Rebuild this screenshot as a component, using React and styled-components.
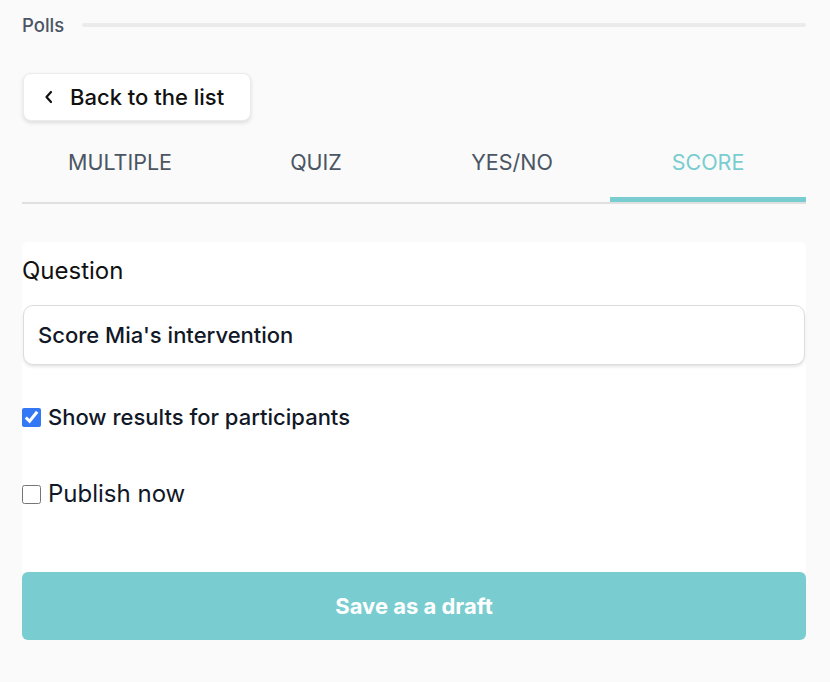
import React, { useState } from "react";
import styled, { createGlobalStyle } from "styled-components";

const GlobalStyle = createGlobalStyle`
  html, body {
    margin: 0;
    padding: 0;
    background: #fafafa;
    font-family: Inter, "Liberation Sans", sans-serif;
    color: #111827;
  }
  * { box-sizing: border-box; }
`;

const Page = styled.div`
  padding: 14px 24px 40px 22px;
  display: flex;
  flex-direction: column;
`;

const SectionHeader = styled.div`
  display: flex;
  align-items: center;
  gap: 18px;
  height: 22px;
`;

const SectionTitle = styled.span`
  font-size: 18.5px;
  font-weight: 500;
  color: #4b5563;
`;

const SectionRule = styled.div`
  flex: 1;
  height: 4px;
  background: #ebebeb;
  border-radius: 2px;
`;

const BackButton = styled.button`
  align-self: flex-start;
  margin-top: 37px;
  margin-left: 1px;
  height: 48px;
  padding: 0 26px 0 20px;
  display: flex;
  align-items: center;
  gap: 16px;
  background: #fff;
  border: 1px solid #ececec;
  border-radius: 8px;
  box-shadow: 0 2px 4px rgba(0, 0, 0, 0.12);
  font-family: inherit;
  font-size: 22px;
  font-weight: 500;
  color: #111;
  cursor: pointer;
`;

const TabList = styled.div`
  display: grid;
  grid-template-columns: repeat(4, 1fr);
  border-bottom: 2px solid #e0e0e0;
`;

const Tab = styled.button`
  height: 81px;
  background: none;
  border: none;
  font-family: inherit;
  font-size: 21.5px;
  font-weight: 400;
  text-transform: uppercase;
  color: ${(p) => (p.$active ? "#79cdd0" : "#4b5563")};
  box-shadow: ${(p) => (p.$active ? "inset 0 -5px 0 #79cdd0" : "none")};
  cursor: pointer;
`;

const Card = styled.div`
  margin-top: 38px;
  background: #fff;
  border-radius: 6px 6px 0 0;
  padding: 13px 0 64px;
  display: flex;
  flex-direction: column;
`;

const Label = styled.label`
  font-size: 24px;
  color: #111;
  line-height: 32px;
`;

const TextInput = styled.input`
  margin-top: 18px;
  margin-left: 1px;
  margin-right: 1px;
  height: 60px;
  padding: 0 14px;
  border: 1px solid #dcdcdc;
  border-radius: 10px;
  box-shadow: 0 2px 3px rgba(0, 0, 0, 0.1);
  font-family: inherit;
  font-size: 22px;
  font-weight: 500;
  color: #111827;
  outline: none;
`;

const CheckRow = styled.label`
  display: flex;
  align-items: center;
  gap: 7px;
  margin-top: ${(p) => p.$gap}px;
  font-size: ${(p) => (p.$bold ? 22 : 24)}px;
  font-weight: ${(p) => (p.$bold ? 500 : 400)};
  color: #111827;
  line-height: 28px;
  cursor: pointer;

  input {
    margin: 0;
    width: 19px;
    height: 19px;
    accent-color: #3478f6;
  }
`;

const SaveButton = styled.button`
  height: 68px;
  border: none;
  border-radius: 6px;
  background: #79cdd0;
  color: #fff;
  font-family: inherit;
  font-size: 22px;
  font-weight: 700;
  cursor: pointer;
`;

const Chevron = () => (
  <svg width="10" height="14" viewBox="0 0 10 14" fill="none">
    <path d="M7 2L2.5 7L7 12" stroke="#111" strokeWidth="2.2" strokeLinecap="round" strokeLinejoin="round" />
  </svg>
);

const tabs = ["Multiple", "Quiz", "Yes/No", "Score"];

export default function App() {
  const [active, setActive] = useState("Score");
  const [question, setQuestion] = useState("Score Mia's intervention");
  const [showResults, setShowResults] = useState(true);
  const [publish, setPublish] = useState(false);

  return (
    <>
      <GlobalStyle />
      <Page>
        <SectionHeader>
          <SectionTitle>Polls</SectionTitle>
          <SectionRule />
        </SectionHeader>

        <BackButton>
          <Chevron />
          Back to the list
        </BackButton>

        <TabList>
          {tabs.map((t) => (
            <Tab key={t} $active={t === active} onClick={() => setActive(t)}>
              {t}
            </Tab>
          ))}
        </TabList>

        <Card>
          <Label htmlFor="question">Question</Label>
          <TextInput id="question" value={question} onChange={(e) => setQuestion(e.target.value)} />

          <CheckRow $gap={38} $bold>
            <input type="checkbox" checked={showResults} onChange={(e) => setShowResults(e.target.checked)} />
            Show results for participants
          </CheckRow>
          <CheckRow $gap={49}>
            <input type="checkbox" checked={publish} onChange={(e) => setPublish(e.target.checked)} />
            Publish now
          </CheckRow>
        </Card>

        <SaveButton>Save as a draft</SaveButton>
      </Page>
    </>
  );
}
